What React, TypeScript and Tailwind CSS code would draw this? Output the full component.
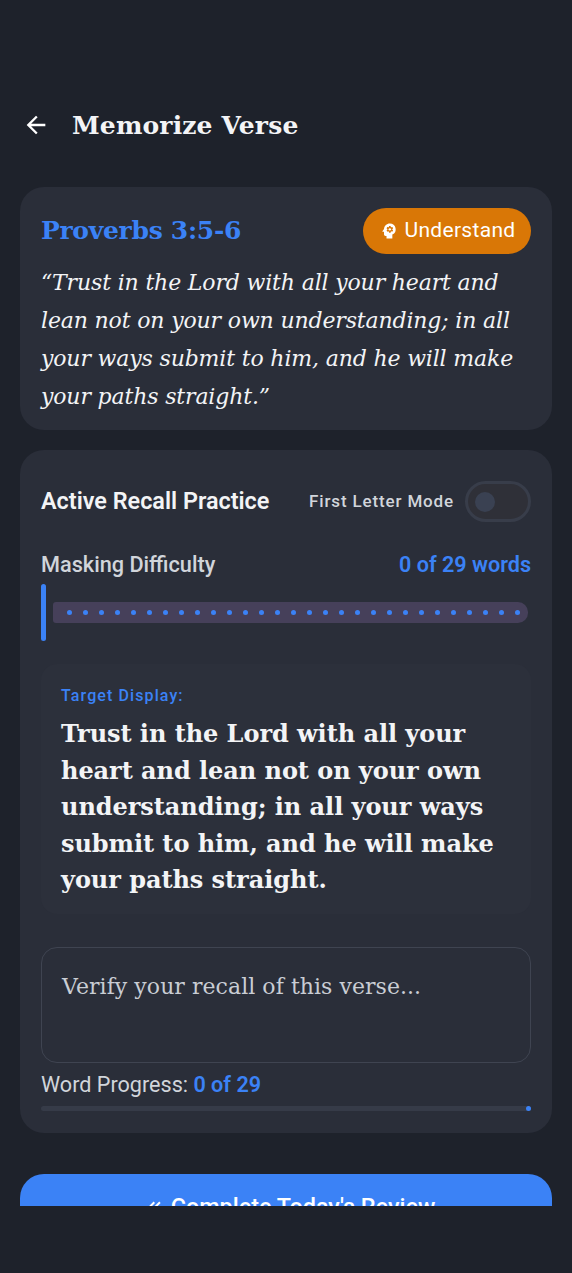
import { MdArrowBack, MdDoneAll, MdPsychology } from "react-icons/md";

const SERIF = "font-['DejaVu_Serif','Liberation_Serif',serif]";
const dots = Array.from({ length: 29 }, (_, i) => i);

export default function App() {
  return (
    <div className="min-h-[1273px] bg-[#1e222b] font-['Roboto',sans-serif]">
      <div className="h-[1206px] overflow-hidden pt-[98px]">
        {/* Header */}
        <header className="flex h-[54px] items-center pl-[22px]">
          <MdArrowBack className="text-white" size={28} />
          <h1 className={`${SERIF} ml-[22px] pt-[1px] text-[25px] font-bold tracking-[0.15px] text-[#f3f4f6]`}>Memorize Verse</h1>
        </header>

        <main className="mt-[35px] flex flex-col px-5">
          {/* Verse card */}
          <section className="h-[243px] rounded-3xl bg-[#2a2e39] px-[21px] pt-[21px]">
            <div className="flex h-[46px] items-center justify-between">
              <h2 className={`${SERIF} text-[25px] font-bold tracking-[-0.3px] text-[#3b82f6]`}>Proverbs 3:5-6</h2>
              <span className="flex h-[46px] w-[168px] items-center justify-center gap-[6px] rounded-full bg-[#d97706] text-[21px] tracking-[0.3px] text-white">
                <MdPsychology size={20} />
                Understand
              </span>
            </div>
            <p className={`${SERIF} mt-[10px] text-[22px] leading-[38px] tracking-[-0.15px] text-[#f3f4f6] italic`}>
              “Trust in the Lord with all your heart and lean not on your own understanding; in all your ways submit to him, and he will make your paths straight.”
            </p>
          </section>

          {/* Recall card */}
          <section className="mt-5 h-[683px] rounded-3xl bg-[#2a2e39] px-[21px] pt-[31px]">
            <div className="flex h-[41px] items-center justify-between">
              <h3 className="text-[23.4px] font-semibold text-[#f3f4f6]">Active Recall Practice</h3>
              <div className="flex items-center gap-[11px]">
                <span className="text-[17px] font-medium tracking-[0.85px] text-[#d1d5db]">First Letter Mode</span>
                <div className="flex h-[41px] w-[66px] items-center rounded-full border-[3px] border-[#383d4a] bg-[#2f3038] pl-[7px]">
                  <div className="size-[20px] rounded-full bg-[#3a4152]" />
                </div>
              </div>
            </div>

            <div className="mt-[28px] flex items-center justify-between leading-[30px]">
              <span className="text-[21.7px] font-medium text-[#d1d5db]">Masking Difficulty</span>
              <span className="text-[21.6px] font-semibold text-[#3b82f6]">0 of 29 words</span>
            </div>

            <div className="mt-[4px] flex h-[57px] items-center">
              <div className="h-[57px] w-[5px] rounded-full bg-[#3b82f6]" />
              <div className="ml-[7px] flex h-[21px] w-[475px] items-center gap-[11px] rounded-l-[3px] rounded-r-[10px] bg-[#46405a] pl-[14px]">
                {dots.map((d) => (
                  <div key={d} className="size-[5px] rounded-full bg-[#3b82f6]" />
                ))}
              </div>
            </div>

            <div className="mt-[23px] h-[250px] rounded-2xl bg-[#2c303b] px-5 pt-[21px]">
              <div className="text-[16px] leading-[22px] font-medium tracking-[1.1px] text-[#3b82f6]">Target Display:</div>
              <p className={`${SERIF} mt-[9px] text-[24px] leading-[36.5px] font-bold tracking-[-0.05px] text-[#f3f4f6]`}>
                Trust in the Lord with all your heart and lean not on your own understanding; in all your ways submit to him, and he will make your paths straight.
              </p>
            </div>

            <div className={`${SERIF} mt-[33px] h-[116px] rounded-2xl border border-[#3f4451] px-5 pt-[22px] text-[22px] leading-[34px] tracking-[0.05px] text-[#c9cdd4]`}>
              Verify your recall of this verse...
            </div>

            <div className="mt-[10px] text-[21.6px] leading-[24px] text-[#d1d5db]">
              Word Progress: <span className="font-semibold text-[#3b82f6]">0 of 29</span>
            </div>

            <div className="mt-[9px] flex h-[5px] items-center justify-end rounded-full bg-[#363b48]">
              <div className="size-[5px] rounded-full bg-[#3b82f6]" />
            </div>
          </section>

          {/* Complete button */}
          <button className="mt-[41px] flex h-[66px] shrink-0 items-center justify-center gap-[10px] rounded-3xl bg-[#3b82f6] pt-[1px] text-[23.4px] font-medium text-white">
            <MdDoneAll size={24} />
            Complete Today's Review
          </button>
        </main>
      </div>
    </div>
  );
}
